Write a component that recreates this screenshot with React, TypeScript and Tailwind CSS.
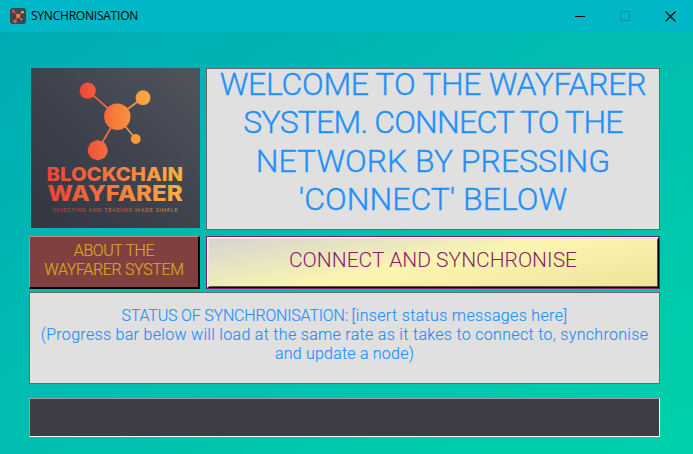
import React from "react";

type LineProps = { className?: string; children: React.ReactNode };

function Line({ className = "", children }: LineProps) {
  return <span className={`block whitespace-nowrap ${className}`}>{children}</span>;
}

function AppIcon() {
  return (
    <svg className="h-4 w-4" viewBox="0 0 16 16">
      <rect width="16" height="16" rx="3" fill="#3d4654" />
      <path d="M3.5 3.2 8 8 12.5 4.2M5 13.2 8 8l3.2 3.4" stroke="#d96a40" strokeWidth=".8" fill="none" />
      <circle cx="3.5" cy="3.2" r="1.5" fill="#f05035" />
      <circle cx="12.5" cy="4.2" r="1.4" fill="#f9a13c" />
      <circle cx="8.2" cy="8" r="2.2" fill="#fa7a3a" />
      <circle cx="5" cy="13.2" r="1.8" fill="#f3563a" />
      <circle cx="11.4" cy="11.4" r=".9" fill="#f39a3f" />
    </svg>
  );
}

function TitleBar() {
  return (
    <header className="flex h-8 items-center bg-[#00b7c7] pl-[10px]">
      <AppIcon />
      <h1 className="ml-[5px] font-['Open_Sans','Noto_Sans',sans-serif] text-[12px] leading-4 font-normal tracking-[-0.22px] text-black">
        SYNCHRONISATION
      </h1>
      <div className="ml-auto flex h-[30px] items-center">
        <button className="flex w-[45px] justify-center" aria-label="Minimise">
          <svg width="10" height="10" shapeRendering="crispEdges">
            <path d="M0 5.5h10" stroke="#000" />
          </svg>
        </button>
        <button className="flex w-[45px] justify-center" aria-label="Maximise">
          <svg width="10" height="10" shapeRendering="crispEdges">
            <rect x=".5" y=".5" width="9" height="9" fill="none" stroke="#0098a5" />
          </svg>
        </button>
        <button className="flex w-[46px] justify-center" aria-label="Close">
          <svg width="11" height="11">
            <path d="M.5.5l10 10M10.5.5l-10 10" stroke="#000" strokeWidth="1.1" />
          </svg>
        </button>
      </div>
    </header>
  );
}

function Logo() {
  return (
    <svg className="ml-[2px] block h-[160px] w-[169px]" viewBox="0 0 169 160">
      <defs>
        <linearGradient id="panel" x1="0" y1="1" x2="1" y2="0">
          <stop offset="0" stopColor="#343642" />
          <stop offset=".5" stopColor="#3e434e" />
          <stop offset="1" stopColor="#51555e" />
        </linearGradient>
        <linearGradient id="flame" gradientUnits="userSpaceOnUse" x1="16" y1="0" x2="152" y2="0">
          <stop offset="0" stopColor="#ee4238" />
          <stop offset=".5" stopColor="#f57b3d" />
          <stop offset="1" stopColor="#fbb241" />
        </linearGradient>
        <linearGradient id="mesh" gradientUnits="userSpaceOnUse" x1="48" y1="0" x2="120" y2="0">
          <stop offset="0" stopColor="#f0433a" />
          <stop offset=".5" stopColor="#f67c3c" />
          <stop offset="1" stopColor="#fbae40" />
        </linearGradient>
      </defs>
      <rect width="169" height="160" fill="url(#panel)" />
      <path
        d="M56.7 22.7 86.3 48.7 112 29.7M66.7 82.3 86.3 48.7l18.4 22.3"
        stroke="url(#mesh)"
        strokeWidth="1.7"
        fill="none"
      />
      <g fill="url(#mesh)">
        <circle cx="56.7" cy="22.7" r="8.1" />
        <circle cx="112" cy="29.7" r="7.4" />
        <circle cx="86.3" cy="48.7" r="13.2" />
        <circle cx="66.7" cy="82.3" r="10" />
        <circle cx="104.7" cy="71" r="4.9" />
      </g>
      <g fill="url(#flame)" fontFamily="Inter, sans-serif" fontWeight="800">
        <text x="15.5" y="113" fontSize="18.6" textLength="136.5" lengthAdjust="spacingAndGlyphs">
          BLOCKCHAIN
        </text>
        <text x="16.6" y="132.7" fontSize="21.6" textLength="135" lengthAdjust="spacingAndGlyphs">
          WAYFARER
        </text>
      </g>
      <text
        x="21.5"
        y="143.8"
        fontSize="5.2"
        fill="url(#flame)"
        opacity=".75"
        fontFamily="Lato, sans-serif"
        fontWeight="400"
        textLength="125"
      >
        INVESTING AND TRADING MADE SIMPLE
      </text>
    </svg>
  );
}

export default function App() {
  return (
    <div className="flex h-[454px] w-[693px] flex-col overflow-hidden font-['Roboto','Liberation_Sans',sans-serif] font-light">
      <TitleBar />
      <main className="flex-1 bg-linear-to-br from-[#00acb4] to-[#00d1aa] pt-9 pr-[33px] pl-[29px]">
        <div className="grid grid-cols-[171px_454px] grid-rows-[162px_53px] gap-x-1.5 gap-y-1.5">
          <Logo />
          <section className="border border-[#696969] bg-[#e0e0e0] text-center text-[32px] leading-[38.3px] text-[#1e90ff] [-webkit-text-stroke:0.35px_#1e90ff]">
            <div className="-mt-[4px]">
              <Line className="tracking-[-0.3px]">WELCOME TO THE WAYFARER</Line>
              <Line className="tracking-[-0.8px]">SYSTEM. CONNECT TO THE</Line>
              <Line>NETWORK BY PRESSING</Line>
              <Line>'CONNECT' BELOW</Line>
            </div>
          </section>
          <button className="border-t border-r-2 border-b-2 border-l border-t-[#c08e8e] border-r-black border-b-black border-l-[#c08e8e] bg-[#804040] pb-[5px] text-center text-[16px] leading-[19px] text-[#daa520] [-webkit-text-stroke:0.2px_#daa520]">
            <Line className="tracking-[-0.4px]">ABOUT THE</Line>
            <Line className="tracking-[-0.35px]">WAYFARER SYSTEM</Line>
          </button>
          <button className="border border-[#8b1a6b]">
            <span className="block h-[51px] border border-t-white border-r-black border-b-black border-l-white bg-linear-[170deg,#d3d3d3_0%,#fcf5b0_50%,#f0e29b_100%] text-center text-[21px] leading-[44px] text-[#8b1a6b] shadow-[inset_1px_1px_#e3e3e3,inset_-1px_-1px_#5a5640]">
              <Line>CONNECT AND SYNCHRONISE</Line>
            </span>
          </button>
        </div>
        <section className="mt-[3px] h-[92px] border border-[#696969] bg-[#e0e0e0] pt-[13px] text-center text-[16px] leading-[19px] text-[#1e90ff] [-webkit-text-stroke:0.15px_#1e90ff]">
          <Line>
            <span className="tracking-[-0.19px]">STATUS OF SYNCHRONISATION: </span>
            <span className="tracking-[0.34px]">[insert status messages here]</span>
          </Line>
          <Line className="tracking-[0.31px]">
            (Progress bar below will load at the same rate as it takes to connect to, synchronise
          </Line>
          <Line className="tracking-[0.22px]">and update a node)</Line>
        </section>
        <div
          role="progressbar"
          className="mt-[14px] h-[39px] border border-t-[#a0a0a0] border-r-white border-b-white border-l-[#a0a0a0] bg-[#3d3d47]"
        />
      </main>
    </div>
  );
}
